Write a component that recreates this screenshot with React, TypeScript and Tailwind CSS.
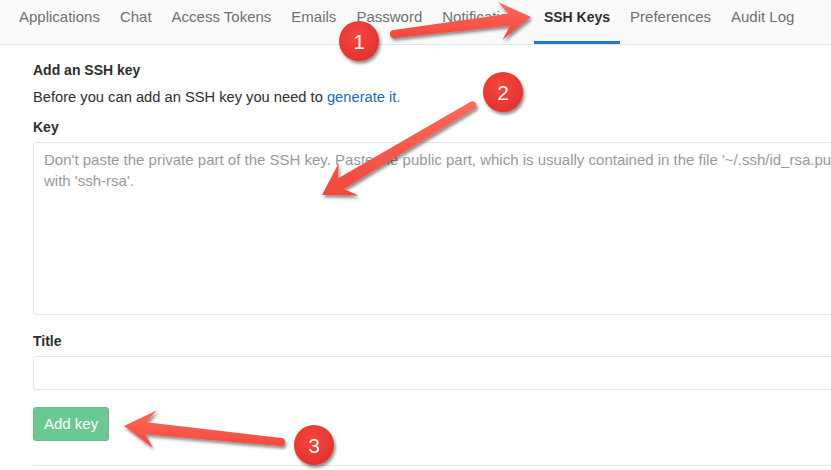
import React from "react";

type Pt = [number, number];

function arrowPath(tail: Pt, tip: Pt, headLen = 31, headHalf = 19, neckHalf = 6, tailHalf = 4, notch = 9) {
  const dx = tip[0] - tail[0];
  const dy = tip[1] - tail[1];
  const len = Math.hypot(dx, dy);
  const ux = dx / len;
  const uy = dy / len;
  const nx = -uy;
  const ny = ux;
  const p = (base: Pt, along: number, side: number): string =>
    `${(base[0] + ux * along + nx * side).toFixed(1)} ${(base[1] + uy * along + ny * side).toFixed(1)}`;
  const neckAlong = -(headLen - notch);
  const wingAlong = -headLen;
  return [
    `M ${p(tip, 0, 0)}`,
    `L ${p(tip, wingAlong, headHalf)}`,
    `L ${p(tip, neckAlong, neckHalf)}`,
    `L ${p(tail, 0, tailHalf)}`,
    `A ${tailHalf} ${tailHalf} 0 0 1 ${p(tail, 0, -tailHalf)}`,
    `L ${p(tip, neckAlong, -neckHalf)}`,
    `L ${p(tip, wingAlong, -headHalf)}`,
    "Z",
  ].join(" ");
}

const tabs = ["Applications", "Chat", "Access Tokens", "Emails", "Password", "Notifications", "SSH Keys", "Preferences", "Audit Log"];

function Badge({ cx, cy, n }: { cx: number; cy: number; n: string }) {
  return (
    <g filter="url(#shadow)">
      <circle cx={cx} cy={cy} r={20} fill="url(#badgeGrad)" />
      <text
        x={cx}
        y={cy + 7.5}
        textAnchor="middle"
        fontSize="21"
        fill="#ffffff"
        fontFamily="'Liberation Sans', Arial, sans-serif"
      >
        {n}
      </text>
    </g>
  );
}

export default function App() {
  return (
    <div
      className="relative w-[831px] h-[470px] overflow-hidden bg-white text-[#2e2e2e]"
      style={{ fontFamily: "'Liberation Sans', Arial, sans-serif" }}
    >
      <div className="flex h-[45px] bg-[#fafafa] border-b border-[#e5e5e5] pl-[9px]">
        {tabs.map((t) => {
          const active = t === "SSH Keys";
          return (
            <div
              key={t}
              className={
                active
                  ? "h-[44px] px-[10px] pt-[7px] text-[14px] leading-[20px] whitespace-nowrap font-bold text-[#2e2e2e] border-b-[3px] border-[#1f78d1]"
                  : "h-[44px] px-[10px] pt-[7px] text-[15px] leading-[20px] whitespace-nowrap text-[#707070]"
              }
            >
              {t}
            </div>
          );
        })}
      </div>

      <div className="pl-[33px] w-[960px] flex flex-col">
        <div className="mt-[15px] text-[14px] leading-[20px] font-bold">Add an SSH key</div>
        <div className="mt-[7px] text-[14.7px] leading-[20px]">
          Before you can add an SSH key you need to <span className="text-[#1b69b6]">generate it.</span>
        </div>
        <div className="mt-[10px] text-[14px] leading-[20px] font-bold">Key</div>
        <textarea
          className="mt-[5px] w-[960px] h-[173px] border border-[#e5e5e5] rounded-[3px] px-[10px] pt-[6px] text-[15px] leading-[21px] resize-none outline-none placeholder:text-[#999999]"
          placeholder={"Don't paste the private part of the SSH key. Paste the public part, which is usually contained in the file '~/.ssh/id_rsa.pub' and begins\nwith 'ssh-rsa'."}
        />
        <div className="mt-[16px] text-[14px] leading-[20px] font-bold">Title</div>
        <input className="mt-[5px] w-[920px] h-[34px] border border-[#e5e5e5] rounded-[3px] px-[10px] outline-none" />
        <div className="mt-[17px]">
          <button className="h-[34px] px-[10px] rounded-[3px] bg-[#6ac890] border border-[#67bd8a] text-white text-[15px] leading-[20px]">
            Add key
          </button>
        </div>
        <div className="mt-[24px] w-[900px] border-t border-[#e5e5e5]" />
      </div>

      <svg className="absolute left-0 top-0 pointer-events-none" width="831" height="470" viewBox="0 0 831 470">
        <defs>
          <filter id="shadow" x="-30%" y="-30%" width="160%" height="160%">
            <feDropShadow dx="1.5" dy="2.5" stdDeviation="1.8" floodColor="#000" floodOpacity="0.45" />
          </filter>
          <linearGradient id="arrowGrad" x1="0" y1="0" x2="0" y2="1">
            <stop offset="0" stopColor="#ff6a5a" />
            <stop offset="1" stopColor="#f1473d" />
          </linearGradient>
          <radialGradient id="badgeGrad" cx="0.45" cy="0.35" r="0.7">
            <stop offset="0" stopColor="#f4473f" />
            <stop offset="1" stopColor="#e2302d" />
          </radialGradient>
        </defs>
        <path d={arrowPath([394, 34], [531, 17])} fill="url(#arrowGrad)" filter="url(#shadow)" />
        <path d={arrowPath([473, 105], [322, 195])} fill="url(#arrowGrad)" filter="url(#shadow)" />
        <path d={arrowPath([281, 442], [124, 426])} fill="url(#arrowGrad)" filter="url(#shadow)" />
        <Badge cx={359} cy={41} n="1" />
        <Badge cx={503} cy={92} n="2" />
        <Badge cx={314} cy={445} n="3" />
      </svg>
    </div>
  );
}
